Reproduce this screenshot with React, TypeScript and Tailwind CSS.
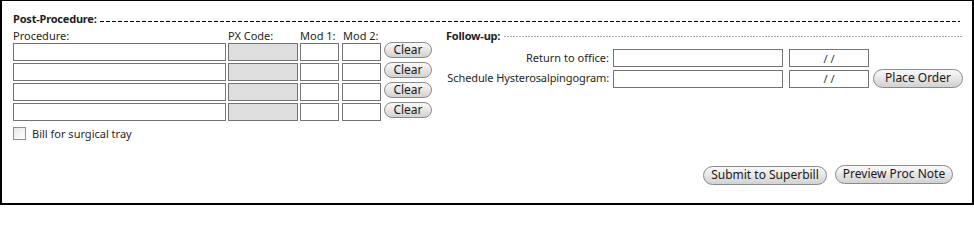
import React from "react";

const inputBase = "block shrink-0 border border-[#747474] h-[18px] px-[2px] text-[11px] outline-none";
const inputCls = `${inputBase} bg-white`;
const btnCls =
  "shrink-0 flex items-center justify-center rounded-full border border-[#8a8a8a] bg-linear-to-b from-[#fafafa] to-[#d2d2d2] text-[12px] leading-none text-[#1a1a1a] pb-[1px]";

function ProcRow() {
  return (
    <div className="flex items-start h-[18px]">
      <input className={`${inputCls} w-[213px]`} defaultValue="" />
      <input className={`${inputBase} w-[70px] ml-[2px] bg-[#dedede]`} defaultValue="" readOnly />
      <input className={`${inputCls} w-[39px] ml-[2px]`} defaultValue="" />
      <input className={`${inputCls} w-[39px] ml-[3px]`} defaultValue="" />
      <button className={`${btnCls} w-[48px] h-[16px] ml-[3px] -mt-px`}>Clear</button>
    </div>
  );
}

export default function App() {
  return (
    <div className="w-[974px] h-[205px] border-2 border-t border-black bg-white pl-[11px] pr-[12px] pt-[10px] font-['Noto_Sans',sans-serif] text-[11px] text-[#1f1f1f]">
      <div className="flex items-end h-[15px]">
        <span className="font-bold leading-[15px] tracking-[-0.2px]">Post-Procedure:</span>
        <div className="flex-1 ml-[3px] mb-[4px] h-px bg-[repeating-linear-gradient(to_right,#000_0_4px,transparent_4px_6px)]" />
      </div>
      <div className="flex mt-[3px]">
        <div className="w-[419px] shrink-0">
          <div className="flex items-center h-[14px] leading-[14px]">
            <span className="w-[215px] shrink-0">Procedure:</span>
            <span className="w-[72px] shrink-0">PX Code:</span>
            <span className="w-[43px] shrink-0">Mod 1:</span>
            <span className="shrink-0">Mod 2:</span>
          </div>
          <div className="flex flex-col gap-[2px]">
            <ProcRow />
            <ProcRow />
            <ProcRow />
            <ProcRow />
          </div>
        </div>
        <div className="ml-[14px] flex-1">
          <div className="flex items-center h-[14px]">
            <span className="font-bold leading-[14px] tracking-[-0.2px]">Follow-up:</span>
            <div className="flex-1 ml-[4px] h-px bg-[repeating-linear-gradient(to_right,#a8a8a8_0_2px,transparent_2px_3px)]" />
          </div>
          <div className="flex items-center h-[18px] mt-[6px]">
            <span className="w-[163px] shrink-0 text-right whitespace-nowrap">Return to office:</span>
            <input className={`${inputCls} w-[170px] ml-[4px]`} defaultValue="" />
            <input className={`${inputCls} w-[80px] ml-[6px] text-center text-[#333]`} defaultValue="/ /" />
          </div>
          <div className="flex items-center h-[19px] mt-[2px]">
            <span className="w-[163px] shrink-0 flex justify-end whitespace-nowrap tracking-[-0.1px]">Schedule Hysterosalpingogram:</span>
            <input className={`${inputCls} w-[170px] ml-[4px]`} defaultValue="" />
            <input className={`${inputCls} w-[80px] ml-[6px] text-center text-[#333]`} defaultValue="/ /" />
            <button className={`${btnCls} w-[90px] h-[19px] ml-[4px]`}>Place Order</button>
          </div>
        </div>
      </div>
      <div className="flex items-center h-[13px] mt-[6px]">
        <span className="block w-[13px] h-[13px] border border-[#8f8f8f] bg-linear-to-br from-[#e8e8e8] to-white" />
        <span className="ml-[6px] leading-[13px]">Bill for surgical tray</span>
      </div>
      <div className="flex justify-end gap-[8px] pr-[7px] mt-[26px]">
        <button className={`${btnCls} w-[124px] h-[19px]`}>Submit to Superbill</button>
        <button className={`${btnCls} w-[118px] h-[19px] -mt-px`}>Preview Proc Note</button>
      </div>
    </div>
  );
}
